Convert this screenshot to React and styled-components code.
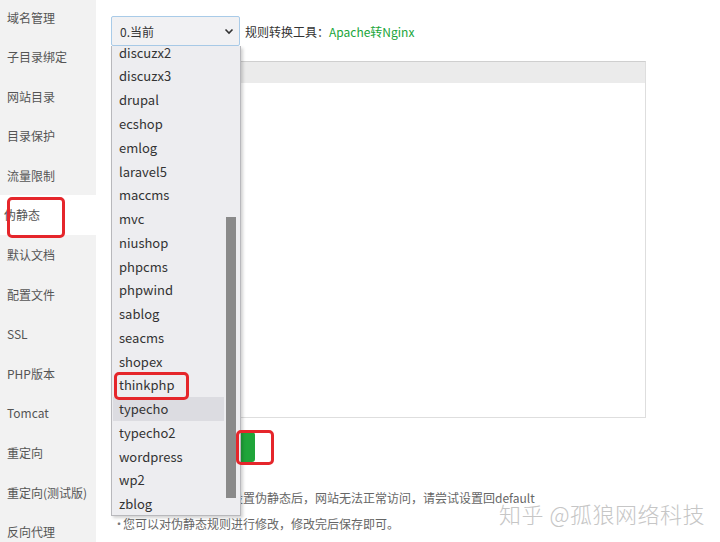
import React from 'react';
import styled, { createGlobalStyle } from 'styled-components';

const GlobalStyle = createGlobalStyle`
  html, body {
    margin: 0;
    padding: 0;
    background: #fff;
    overflow: hidden;
  }
  body {
    font-family: "Noto Sans CJK SC", "Noto Sans", sans-serif;
    color: #333;
  }
  * {
    box-sizing: border-box;
  }
`;

const Page = styled.div`
  position: relative;
  display: flex;
  width: 720px;
  height: 542px;
  overflow: hidden;
  background: #fff;
`;

const Sidebar = styled.ul`
  list-style: none;
  margin: -2.8px 0 0;
  padding: 0;
  width: 96px;
  flex-shrink: 0;
  height: 560px;
  background: #f2f2f2;
`;

const MenuItem = styled.li`
  position: relative;
  height: 39.6px;
  display: flex;
  align-items: center;
  padding-left: ${p => (p.active ? '4px' : '7px')};
  font-size: 12px;
  color: #555;
  background: ${p => (p.active ? '#fff' : 'transparent')};
  white-space: nowrap;
`;

const Mark = styled.span`
  position: absolute;
  top: ${p => p.top}px;
  left: ${p => p.left}px;
  width: ${p => p.w}px;
  height: ${p => p.h}px;
  border: 3px solid #e5262b;
  border-radius: 5px;
  pointer-events: none;
  z-index: 5;
`;

const Main = styled.div`
  flex: 1;
  padding: 16px 0 0 15px;
`;

const Toolbar = styled.div`
  display: flex;
  align-items: center;
  gap: 5px;
  height: 30px;
`;

const SelectWrap = styled.div`
  position: relative;
  width: 129px;
  height: 30px;
`;

const SelectBox = styled.div`
  height: 30px;
  display: flex;
  align-items: center;
  justify-content: space-between;
  padding: 0 4px 0 8px;
  border: 1px solid #a9cbe8;
  border-radius: 2px;
  background: #f1f1f3;
  font-size: 12px;
  color: #333;
`;

const Dropdown = styled.div`
  position: absolute;
  top: 30px;
  left: 0;
  width: 130px;
  height: 470px;
  display: flex;
  background: #ededf0;
  border: 1px solid #b8b8bc;
  border-top: none;
  box-shadow: 2px 2px 3px rgba(0, 0, 0, 0.18);
  overflow: hidden;
  z-index: 4;
`;

const Options = styled.ul`
  list-style: none;
  margin: -5.7px 0 0;
  padding: 0;
  flex: 1;
`;

const Option = styled.li`
  position: relative;
  height: 23.78px;
  display: flex;
  align-items: center;
  padding-left: 6px;
  margin-left: 1px;
  font-size: 13px;
  color: #333;
  background: ${p => (p.hover ? '#dcdce1' : 'transparent')};
`;

const ScrollTrack = styled.div`
  width: 16px;
  flex-shrink: 0;
  padding: 171px 3px 0 2px;
`;

const ScrollThumb = styled.div`
  width: 10px;
  height: 281px;
  background: #8a8a8a;
`;

const ToolLabel = styled.span`
  font-size: 12px;
  color: #333;
`;

const ToolLink = styled.span`
  color: #20a53a;
`;

const Editor = styled.div`
  margin-top: 15px;
  width: 535px;
  height: 357px;
  border: 1px solid #dedede;
  border-top-color: #cfcfcf;
`;

const EditorHead = styled.div`
  height: 21px;
  background: #ebebeb;
`;

const ButtonRow = styled.div`
  position: relative;
  margin-top: 14px;
  height: 30px;
`;

const SaveButton = styled.button`
  width: 144px;
  height: 30px;
  border: 0;
  border-radius: 3px;
  background: #20a53a;
  color: #fff;
  font-size: 12px;
  font-family: inherit;
`;

const Tips = styled.ul`
  list-style: none;
  margin: 23px 0 0;
  padding: 0 0 0 2px;
  font-size: 12px;
  color: #666;
`;

const Tip = styled.li`
  line-height: 26px;
  white-space: nowrap;

  &::before {
    content: '•';
    display: inline-block;
    width: 10px;
    color: #777;
  }
`;

const Watermark = styled.div`
  position: absolute;
  right: 15px;
  bottom: 13px;
  font-size: 22px;
  font-weight: 300;
  letter-spacing: 0.5px;
  color: #c6c6c6;
  text-shadow: 0 0 2px #fff, 0 0 2px #fff;
  z-index: 6;
`;

const Chevron = () => (
  <svg width="12" height="12" viewBox="0 0 12 12">
    <path d="M2.5 4.5 L6 8 L9.5 4.5" fill="none" stroke="#333" strokeWidth="1.6" />
  </svg>
);

const menu = [
  '域名管理', '子目录绑定', '网站目录', '目录保护', '流量限制', '伪静态', '默认文档',
  '配置文件', 'SSL', 'PHP版本', 'Tomcat', '重定向', '重定向(测试版)', '反向代理',
];

const options = [
  'discuzx2', 'discuzx3', 'drupal', 'ecshop', 'emlog', 'laravel5', 'maccms', 'mvc',
  'niushop', 'phpcms', 'phpwind', 'sablog', 'seacms', 'shopex', 'thinkphp', 'typecho',
  'typecho2', 'wordpress', 'wp2', 'zblog',
];

const App = () => (
  <Page>
    <GlobalStyle />
    <Sidebar>
      {menu.map(m => (
        <MenuItem key={m} active={m === '伪静态'}>
          {m}
          {m === '伪静态' && <Mark top={2} left={7} w={58} h={41} />}
        </MenuItem>
      ))}
    </Sidebar>
    <Main>
      <Toolbar>
        <SelectWrap>
          <SelectBox>
            0.当前
            <Chevron />
          </SelectBox>
          <Dropdown>
            <Options>
              {options.map(o => (
                <Option key={o} hover={o === 'typecho'}>
                  {o}
                  {o === 'thinkphp' && <Mark top={-1} left={1} w={75} h={28} />}
                </Option>
              ))}
            </Options>
            <ScrollTrack>
              <ScrollThumb />
            </ScrollTrack>
          </Dropdown>
        </SelectWrap>
        <ToolLabel>
          规则转换工具：<ToolLink>Apache转Nginx</ToolLink>
        </ToolLabel>
      </Toolbar>
      <Editor>
        <EditorHead />
      </Editor>
      <ButtonRow>
        <SaveButton>保存</SaveButton>
        <Mark top={-2} left={125} w={38} h={35} />
      </ButtonRow>
      <Tips>
        <Tip>请选择您的应用，若设置伪静态后，网站无法正常访问，请尝试设置回default</Tip>
        <Tip>您可以对伪静态规则进行修改，修改完后保存即可。</Tip>
      </Tips>
    </Main>
    <Watermark>知乎 @孤狼网络科技</Watermark>
  </Page>
);

export default App;
